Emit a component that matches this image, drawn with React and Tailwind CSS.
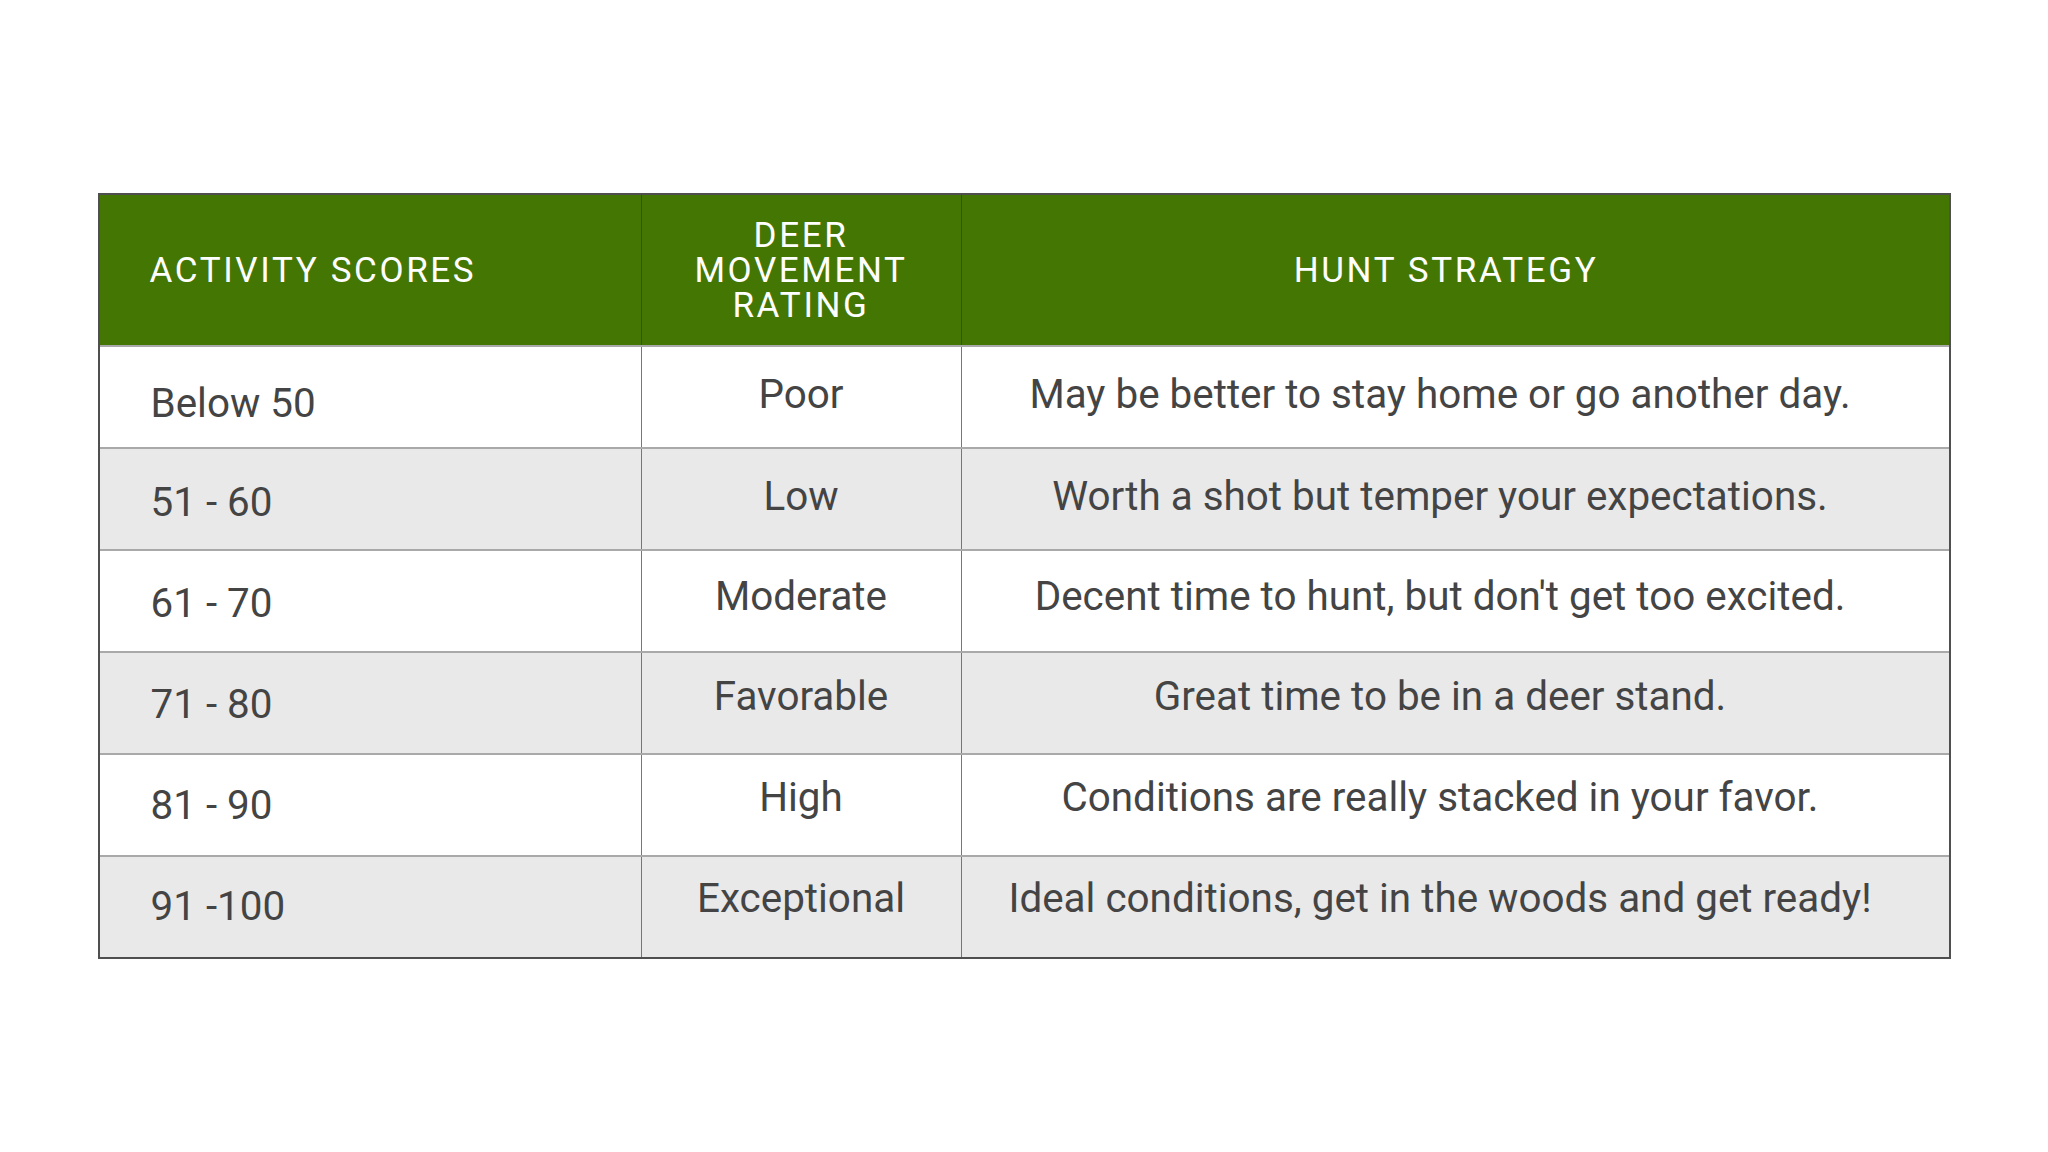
const rows = [
  { score: 'Below 50', rating: 'Poor', strategy: 'May be better to stay home or go another day.', left: 'pt-[15px]', right: 'pb-[3px]' },
  { score: '51 - 60', rating: 'Low', strategy: 'Worth a shot but temper your expectations.', left: 'pt-[9px]', right: 'pb-[3px]' },
  { score: '61 - 70', rating: 'Moderate', strategy: "Decent time to hunt, but don't get too excited.", left: 'pt-[7px]', right: 'pb-[8px]' },
  { score: '71 - 80', rating: 'Favorable', strategy: 'Great time to be in a deer stand.', left: 'pt-[4px]', right: 'pb-[11px]' },
  { score: '81 - 90', rating: 'High', strategy: 'Conditions are really stacked in your favor.', left: 'pt-[2px]', right: 'pb-[14px]' },
  { score: '91 -100', rating: 'Exceptional', strategy: 'Ideal conditions, get in the woods and get ready!', left: 'pt-0', right: 'pb-[16px]' },
];

export default function App() {
  return (
    <div className="min-h-[1152px] w-full bg-white pt-[193px] font-['Roboto','Liberation_Sans',sans-serif]">
      <div className="mx-auto w-[1853px] border-2 border-[#4f4f4f]">
        {/* header */}
        <div className="grid h-[150px] grid-cols-[541px_320px_1fr] bg-[#437603] text-[35px] uppercase leading-[35px] tracking-[0.075em] text-white">
          <div className="flex items-center pl-[50px]">Activity Scores</div>
          <div className="flex items-center justify-center border-l border-[#3a4a30] text-center">
            Deer
            <br />
            Movement
            <br />
            Rating
          </div>
          <div className="flex items-center justify-center border-l border-[#3a4a30] pr-[18px]">Hunt Strategy</div>
        </div>

        {rows.map((row, i) => (
          <div
            key={row.score}
            className={
              'grid h-[102px] grid-cols-[541px_320px_1fr] border-t-2 border-[#a9a9a9] text-[40.4px] text-[#444] ' +
              (i % 2 === 0 ? 'bg-white' : 'bg-[#e9e9ea]')
            }
          >
            <div className={'flex items-center pl-[51px] ' + row.left}>{row.score}</div>
            <div className={'flex items-center justify-center border-l border-[#777] ' + row.right}>{row.rating}</div>
            <div className={'flex items-center justify-center border-l border-[#777] pr-[30px] ' + row.right}>{row.strategy}</div>
          </div>
        ))}
      </div>
    </div>
  );
}
